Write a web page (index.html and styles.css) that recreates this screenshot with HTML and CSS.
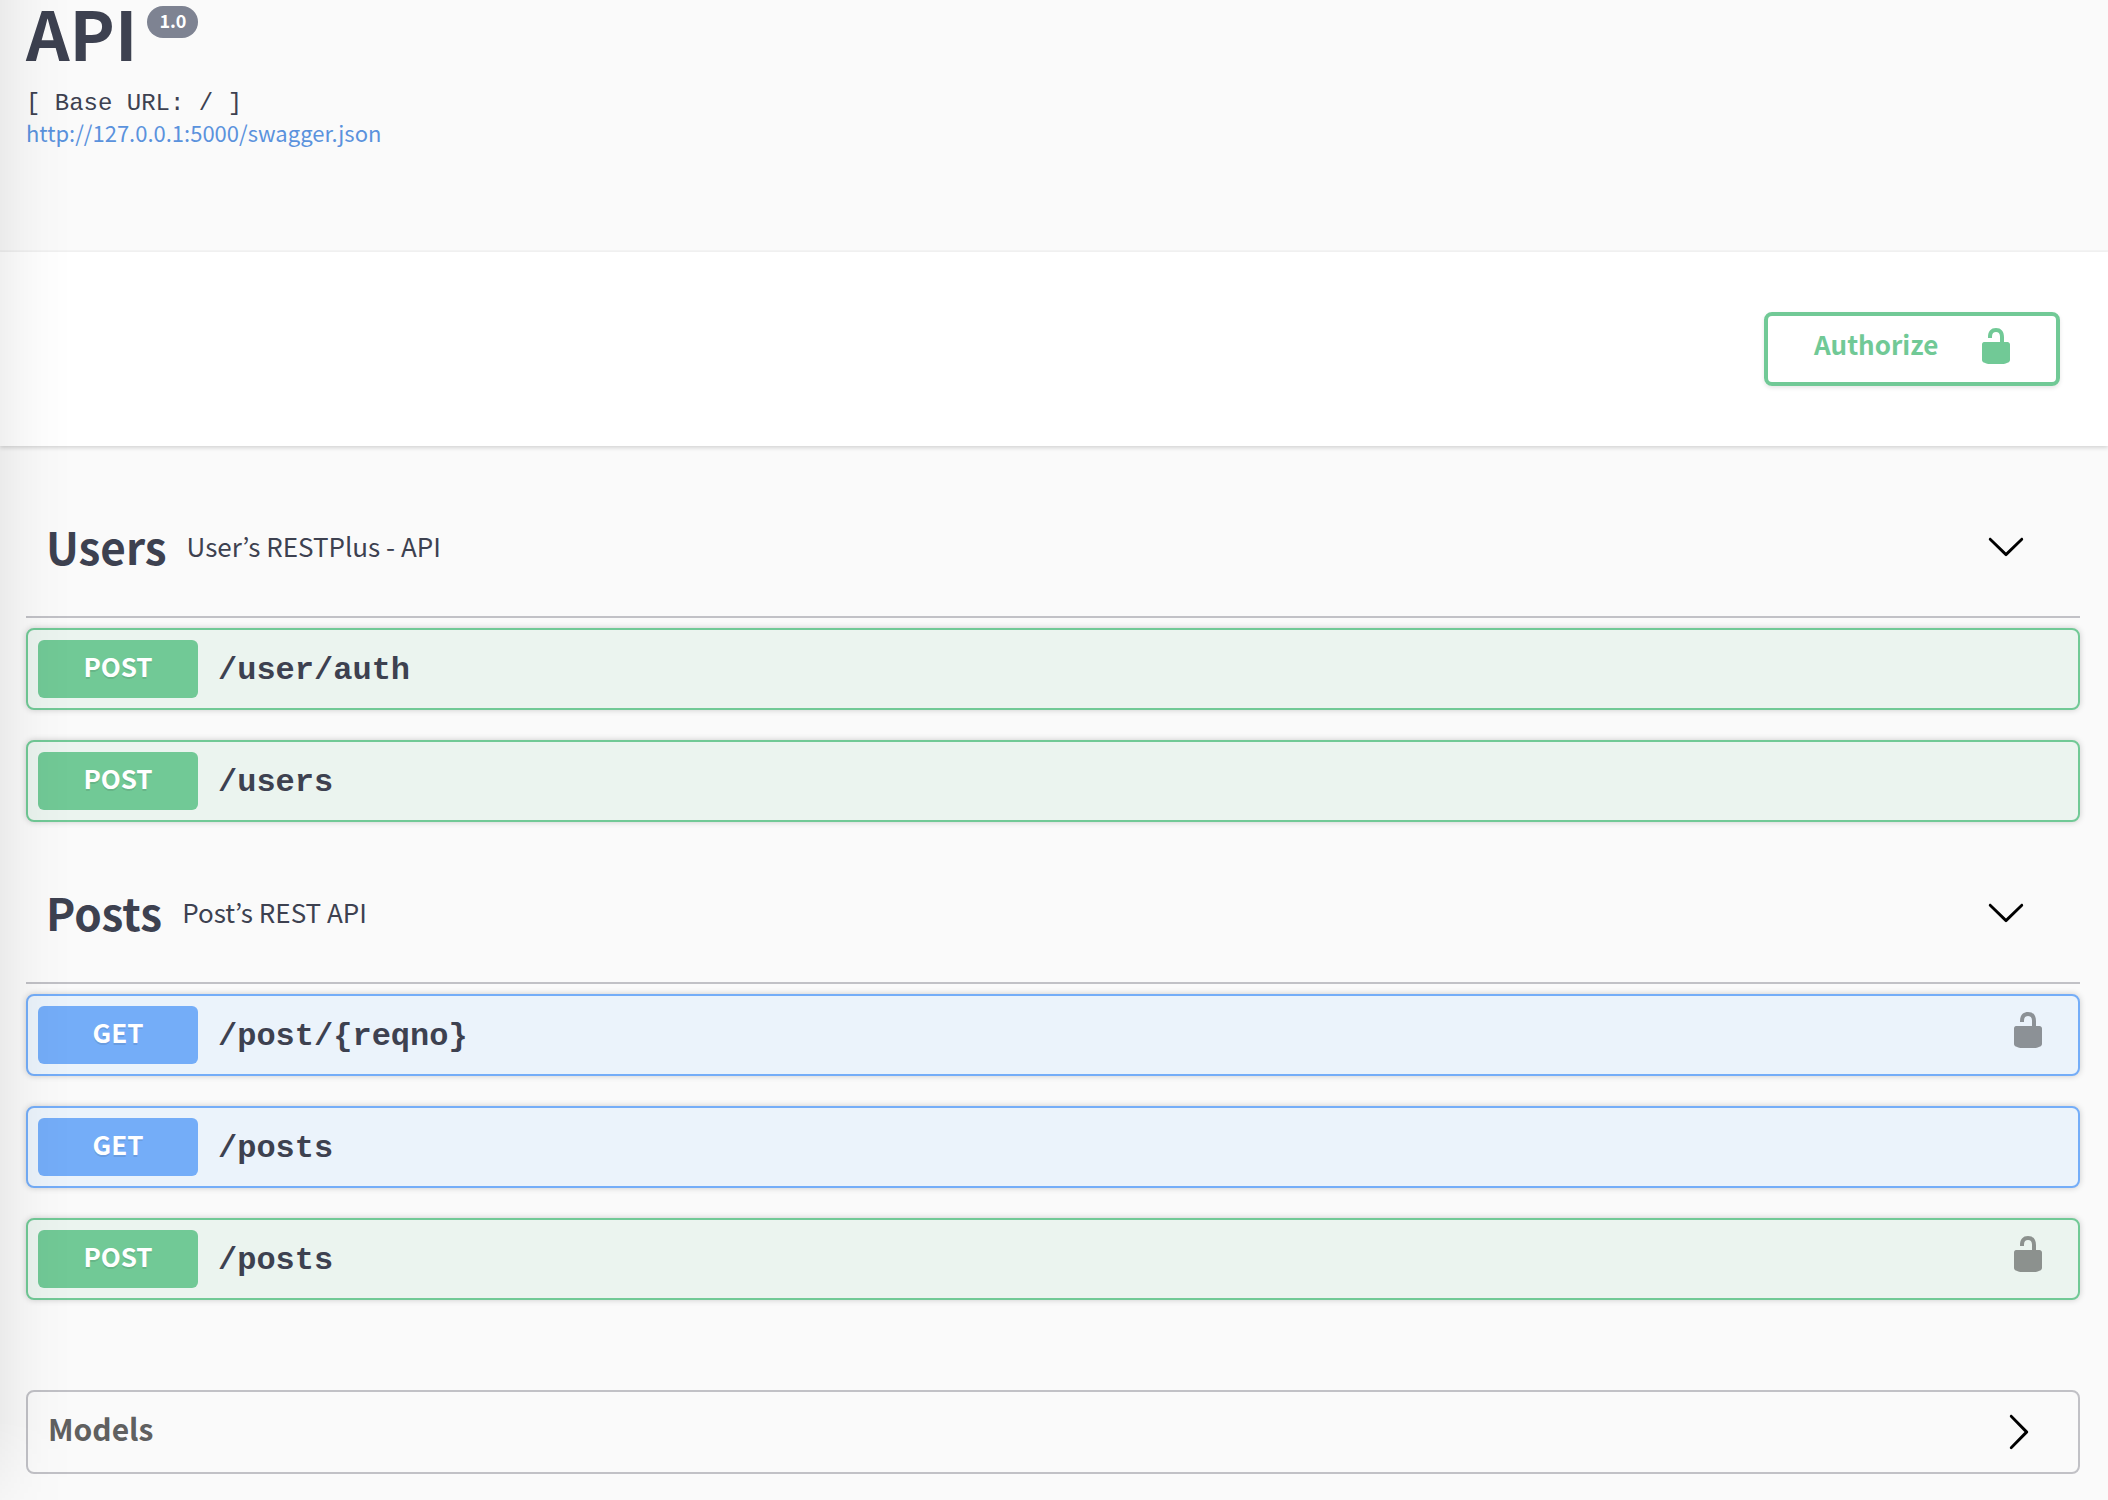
FILE: index.html
```html
<!DOCTYPE html>
<html lang="en">
<head>
<meta charset="utf-8">
<title>API</title>
<link rel="stylesheet" href="styles.css">
</head>
<body>
<svg class="sprite" aria-hidden="true">
  <symbol id="unlocked" viewBox="0 0 20 20"><path d="M15.8 8H14V5.6C14 2.703 12.665 1 10 1 7.334 1 6 2.703 6 5.6V6h2v-.801C8 3.754 8.797 3 10 3c1.203 0 2 .754 2 2.199V8H4c-.553 0-1 .646-1 1.199V17c0 .549.428 1.139.951 1.307l1.197.387C5.672 18.861 6.55 19 7.1 19h5.8c.549 0 1.428-.139 1.951-.307l1.196-.387c.524-.167.953-.757.953-1.306V9.199C17 8.646 16.352 8 15.8 8z"/></symbol>
  <symbol id="arrow-down" viewBox="0 0 20 20"><path d="M17.418 6.109c.272-.268.709-.268.979 0s.271.701 0 .969l-7.908 7.83c-.27.268-.707.268-.979 0l-7.908-7.83c-.27-.268-.27-.701 0-.969.271-.268.709-.268.979 0L10 13.25l7.418-7.141z"/></symbol>
  <symbol id="arrow-right" viewBox="0 0 20 20"><path d="M13.25 10L6.109 2.58c-.268-.27-.268-.707 0-.979.268-.27.701-.27.969 0l7.83 7.908c.268.271.268.709 0 .979l-7.83 7.908c-.268.271-.701.27-.969 0-.268-.269-.268-.707 0-.979L13.25 10z"/></symbol>
</svg>
<div class="page">
  <header class="info wrapper">
    <h1 class="title">API <span class="version">1.0</span></h1>
    <p class="base-url">[ Base URL: / ]</p>
    <a class="spec-link" href="http://127.0.0.1:5000/swagger.json">http://127.0.0.1:5000/swagger.json</a>
  </header>
  <div class="schemes wrapper">
    <button class="authorize" type="button"><span>Authorize</span><svg class="icon"><use href="#unlocked"/></svg></button>
  </div>
  <main class="wrapper">
    <section class="tag">
      <div class="tag-header">
        <h2 class="tag-name">Users</h2>
        <p class="tag-text">User’s RESTPlus - API</p>
        <button class="toggle" type="button" aria-label="Collapse Users"><svg class="icon"><use href="#arrow-down"/></svg></button>
      </div>
      <div class="operations">
        <div class="op post"><button class="method" type="button">POST</button><span class="path">/user/auth</span></div>
        <div class="op post"><button class="method" type="button">POST</button><span class="path">/users</span></div>
      </div>
    </section>
    <section class="tag">
      <div class="tag-header">
        <h2 class="tag-name">Posts</h2>
        <p class="tag-text">Post’s REST API</p>
        <button class="toggle" type="button" aria-label="Collapse Posts"><svg class="icon"><use href="#arrow-down"/></svg></button>
      </div>
      <div class="operations">
        <div class="op get"><button class="method" type="button">GET</button><span class="path">/post/{reqno}</span><button class="lock" type="button" aria-label="Authorize"><svg class="icon"><use href="#unlocked"/></svg></button></div>
        <div class="op get"><button class="method" type="button">GET</button><span class="path">/posts</span></div>
        <div class="op post"><button class="method" type="button">POST</button><span class="path">/posts</span><button class="lock" type="button" aria-label="Authorize"><svg class="icon"><use href="#unlocked"/></svg></button></div>
      </div>
    </section>
    <section class="models">
      <h3 class="models-title">Models</h3>
      <button class="toggle" type="button" aria-label="Expand models"><svg class="icon"><use href="#arrow-right"/></svg></button>
    </section>
  </main>
</div>
</body>
</html>
```
FILE: styles.css
```css
:root {
  --sans: "Noto Sans CJK KR", "Noto Sans", sans-serif;
  --mono: "Liberation Mono", "Courier New", monospace;
  --text: #3d4150;
  --green: #71c996;
  --blue: #74adf8;
  --line: #c1c1c6;
}

* { box-sizing: border-box; }

body {
  margin: 0;
  background: #fafafa;
  color: var(--text);
  font-family: var(--sans);
}

h1, h2, h3, p { margin: 0; }

button {
  padding: 0;
  border: 0;
  background: none;
  font-family: inherit;
  cursor: pointer;
}

.sprite { display: none; }

.icon {
  display: block;
  width: 40px;
  height: 40px;
  fill: currentColor;
}

.page {
  position: relative;
  min-height: 100vh;
  padding-bottom: 24px;
}

/* soft shade along the left edge of the window */
.page::after {
  content: "";
  position: absolute;
  inset: 0 auto 0 0;
  width: 72px;
  background: linear-gradient(to right, rgba(0, 0, 0, .06), rgba(0, 0, 0, .03) 30%, rgba(0, 0, 0, .01) 60%, transparent);
  mask-image: linear-gradient(to top, rgba(0, 0, 0, .3), #000 80px);
  pointer-events: none;
}

.wrapper { padding: 0 28px 0 26px; }

.info { height: 252px; border-bottom: 2px solid #f4f4f4; }

.title {
  display: flex;
  align-items: flex-start;
  gap: 10px;
  margin-bottom: 26px;
  font-size: 68px;
  line-height: 64px;
}

.version {
  height: 32px;
  margin-top: 6px;
  padding: 0 12px;
  border-radius: 16px;
  background: #7e8392;
  color: #fff;
  font-size: 18px;
  line-height: 28px;
}

.base-url { font: 24px/28px var(--mono); }

.spec-link {
  display: block;
  width: fit-content;
  color: #5a92dd;
  font-size: 22px;
  line-height: 28px;
  text-decoration: none;
}

.schemes {
  display: flex;
  justify-content: flex-end;
  padding: 60px 48px;
  background: #fff;
  box-shadow: 0 2px 4px rgba(0, 0, 0, .15);
}

.authorize {
  display: flex;
  justify-content: space-between;
  width: 296px;
  height: 74px;
  padding: 10px 40px 0 46px;
  border: 4px solid var(--green);
  border-radius: 8px;
  color: var(--green);
  font-size: 26px;
  font-weight: 700;
  line-height: 36px;
  box-shadow: 0 2px 4px rgba(0, 0, 0, .1);
}

.tag-header {
  display: flex;
  align-items: center;
  height: 132px;
  padding: 0 54px 10px 20px;
  border-bottom: 2px solid var(--line);
}

.tag { padding-top: 40px; }
.tag + .tag { padding-top: 30px; }

.tag-name { font-size: 44px; line-height: 60px; }
.tag-text { padding-left: 20px; font-size: 26px; line-height: 40px; }

.toggle {
  margin-left: auto;
  color: #000;
}

.operations {
  display: flex;
  flex-direction: column;
  gap: 30px;
  padding-top: 10px;
}

.op {
  display: flex;
  align-items: center;
  height: 82px;
  padding: 10px;
  border: 2px solid;
  border-radius: 8px;
  box-shadow: 0 0 6px rgba(0, 0, 0, .19);
}

.post { border-color: var(--green); background: #ebf4ef; }
.get { border-color: var(--blue); background: #ebf3fb; }

.method {
  width: 160px;
  height: 58px;
  padding-bottom: 8px;
  border-radius: 6px;
  color: #fff;
  font-size: 26px;
  font-weight: 700;
  text-shadow: 0 2px 0 rgba(0, 0, 0, .1);
}

.post .method { background: var(--green); }
.get .method { background: var(--blue); }

.path {
  padding: 4px 0 0 20px;
  font: 700 32px/40px var(--mono);
}

.lock {
  margin: 0 20px 10px auto;
  color: #000;
  opacity: .4;
}

.models {
  display: flex;
  align-items: center;
  height: 84px;
  margin-top: 90px;
  padding: 0 40px 0 20px;
  border: 2px solid var(--line);
  border-radius: 8px;
}

.models-title {
  padding-bottom: 8px;
  color: #606060;
  font-size: 30px;
  line-height: 40px;
}
```
